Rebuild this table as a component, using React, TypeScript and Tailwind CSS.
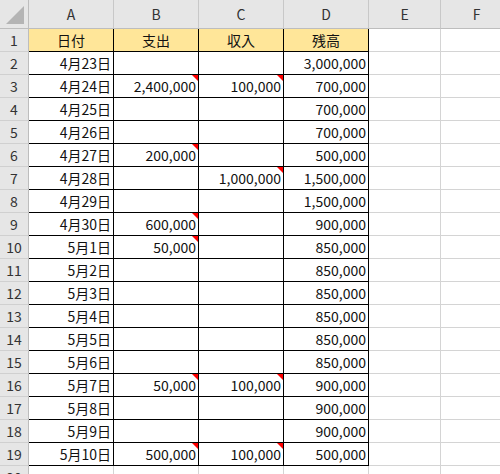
const font = { fontFamily: '"Noto Sans CJK JP", "Noto Sans", sans-serif' };

type Row = { a: string; b?: string; c?: string; d: string; bn?: boolean; cn?: boolean };

const rows: Row[] = [
  { a: '4月23日', d: '3,000,000' },
  { a: '4月24日', b: '2,400,000', bn: true, c: '100,000', cn: true, d: '700,000' },
  { a: '4月25日', d: '700,000' },
  { a: '4月26日', d: '700,000' },
  { a: '4月27日', b: '200,000', bn: true, d: '500,000' },
  { a: '4月28日', c: '1,000,000', cn: true, d: '1,500,000' },
  { a: '4月29日', d: '1,500,000' },
  { a: '4月30日', b: '600,000', bn: true, d: '900,000' },
  { a: '5月1日', b: '50,000', bn: true, d: '850,000' },
  { a: '5月2日', d: '850,000' },
  { a: '5月3日', d: '850,000' },
  { a: '5月4日', d: '850,000' },
  { a: '5月5日', d: '850,000' },
  { a: '5月6日', d: '850,000' },
  { a: '5月7日', b: '50,000', bn: true, c: '100,000', cn: true, d: '900,000' },
  { a: '5月8日', d: '900,000' },
  { a: '5月9日', d: '900,000' },
  { a: '5月10日', b: '500,000', bn: true, c: '100,000', cn: true, d: '500,000' },
];

function RowHead({ n }: { n: number }) {
  return (
    <div className="h-[23px] bg-[#e6e6e6] border-r border-b border-r-[#bdbdbd] border-b-[#d0d0d0] flex items-center justify-center text-[14px] text-[#333]">
      {n}
    </div>
  );
}

function Cell({ v, note }: { v?: string; note?: boolean }) {
  return (
    <div className="relative h-[23px] border-r border-b border-black flex items-center justify-end pr-[2px] text-[14px] text-[#111]">
      {v}
      {note && (
        <div className="absolute top-0 right-0 w-0 h-0 border-t-[6px] border-l-[6px] border-t-[#ff0000] border-l-transparent" />
      )}
    </div>
  );
}

function Empty() {
  return <div className="h-[23px] border-r border-b border-[#d4d4d4]" />;
}

export default function App() {
  const cols = ['A', 'B', 'C', 'D', 'E', 'F'];
  return (
    <div className="w-[500px] h-[474px] overflow-hidden bg-white" style={font}>
      <div className="grid grid-cols-[29px_85px_85px_85px_85px_72px_72px]">
        {/* column headers */}
        <div className="relative h-[29px] bg-[#e6e6e6] border-r border-b border-[#bdbdbd]">
          <div className="absolute right-[4px] bottom-[4px] w-0 h-0 border-b-[18px] border-l-[18px] border-b-[#b4b4b4] border-l-transparent" />
        </div>
        {cols.map((c) => (
          <div
            key={c}
            className="h-[29px] bg-[#e6e6e6] border-r border-b border-r-[#c8c8c8] border-b-[#bdbdbd] flex items-center justify-center text-[14px] text-[#333]"
          >
            {c}
          </div>
        ))}

        {/* row 1 */}
        <RowHead n={1} />
        {['日付', '支出', '収入', '残高'].map((h) => (
          <div
            key={h}
            className="h-[23px] bg-[#ffe699] border-r border-b border-black flex items-center justify-center text-[14px] text-[#111]"
          >
            {h}
          </div>
        ))}
        <Empty />
        <Empty />

        {rows.map((r, i) => (
          <div key={i} className="contents">
            <RowHead n={i + 2} />
            <Cell v={r.a} />
            <Cell v={r.b} note={r.bn} />
            <Cell v={r.c} note={r.cn} />
            <Cell v={r.d} />
            <Empty />
            <Empty />
          </div>
        ))}

        <RowHead n={20} />
        <Empty />
        <Empty />
        <Empty />
        <Empty />
        <Empty />
        <Empty />
      </div>
    </div>
  );
}
